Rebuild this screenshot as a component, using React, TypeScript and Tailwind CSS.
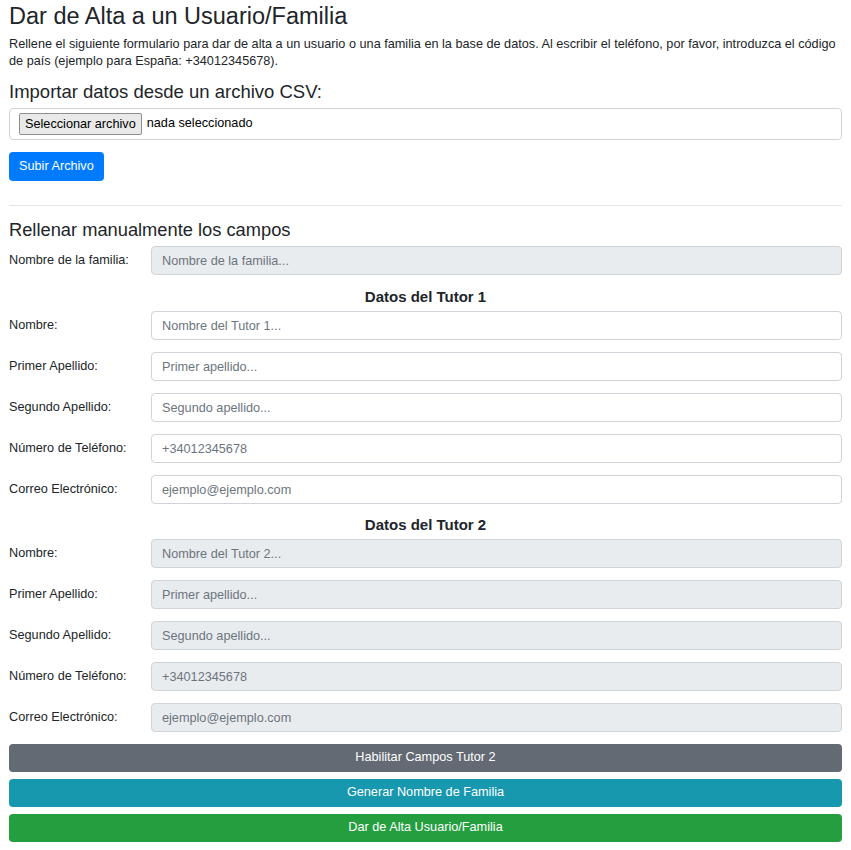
import React from "react";

type Field = { label: string; placeholder: string };

const tutorFields = (n: number): Field[] => [
  { label: "Nombre:", placeholder: `Nombre del Tutor ${n}...` },
  { label: "Primer Apellido:", placeholder: "Primer apellido..." },
  { label: "Segundo Apellido:", placeholder: "Segundo apellido..." },
  { label: "Número de Teléfono:", placeholder: "+34012345678" },
  { label: "Correo Electrónico:", placeholder: "ejemplo@ejemplo.com" },
];

function Row({ label, placeholder, disabled }: Field & { disabled?: boolean }) {
  return (
    <div className="flex items-center">
      <label className="w-[142px] shrink-0 text-[12.7px] text-[#212529]">{label}</label>
      <input
        type="text"
        disabled={disabled}
        placeholder={placeholder}
        className={`h-[29px] flex-1 rounded-[4px] border border-[#ced4da] px-[10px] text-[12.7px] outline-none placeholder:text-[#6c757d] ${
          disabled ? "bg-[#e9ecef]" : "bg-white"
        }`}
      />
    </div>
  );
}

function TutorBlock({ n, disabled }: { n: number; disabled?: boolean }) {
  return (
    <div>
      <h4 className="mb-[5px] text-center text-[15px] font-bold leading-[18px] text-[#212529]">
        Datos del Tutor {n}
      </h4>
      <div className="flex flex-col gap-[12px]">
        {tutorFields(n).map((f) => (
          <Row key={f.label} {...f} disabled={disabled} />
        ))}
      </div>
    </div>
  );
}

export default function App() {
  return (
    <div className="bg-white px-[9px] pb-[8px] font-['Liberation_Sans',Arial,sans-serif] text-[#212529]">
      <h1 className="pt-[2px] text-[23.5px] leading-[28px]">Dar de Alta a un Usuario/Familia</h1>
      <p className="mt-[6px] text-[12.7px] leading-[17px]">
        Rellene el siguiente formulario para dar de alta a un usuario o una familia en la base de datos. Al
        escribir el teléfono, por favor, introduzca el código de país (ejemplo para España: +34012345678).
      </p>

      <h3 className="mt-[11px] text-[18.5px] leading-[22px]">Importar datos desde un archivo CSV:</h3>
      <div className="mt-[5px] flex h-[32px] items-center rounded-[4px] border border-[#ced4da] px-[9px]">
        <span className="rounded-[2px] border border-[#8f8f8f] bg-[#e9e9e9] px-[5px] text-[12.7px] leading-[20px] text-black">
          Seleccionar archivo
        </span>
        <span className="ml-[5px] text-[12.7px] text-black">nada seleccionado</span>
      </div>
      <button className="mt-[12px] h-[29px] rounded-[4px] bg-[#007bff] px-[10px] text-[12.7px] text-white">
        Subir Archivo
      </button>

      <hr className="mt-[24px] border-t border-[#e5e5e5]" />

      <h3 className="mt-[13px] text-[18.3px] leading-[22px]">Rellenar manualmente los campos</h3>
      <div className="mt-[5px]">
        <Row label="Nombre de la familia:" placeholder="Nombre de la familia..." disabled />
      </div>

      <div className="mt-[13px]">
        <TutorBlock n={1} />
      </div>
      <div className="mt-[12px]">
        <TutorBlock n={2} disabled />
      </div>

      <div className="mt-[12px] flex flex-col gap-[7px]">
        <button className="h-[28px] w-full rounded-[4px] bg-[#636a73] text-[12.7px] text-white">
          Habilitar Campos Tutor 2
        </button>
        <button className="h-[28px] w-full rounded-[4px] bg-[#1798af] text-[12.7px] text-white">
          Generar Nombre de Familia
        </button>
        <button className="h-[28px] w-full rounded-[4px] bg-[#249e3f] text-[12.7px] text-white">
          Dar de Alta Usuario/Familia
        </button>
      </div>
    </div>
  );
}
